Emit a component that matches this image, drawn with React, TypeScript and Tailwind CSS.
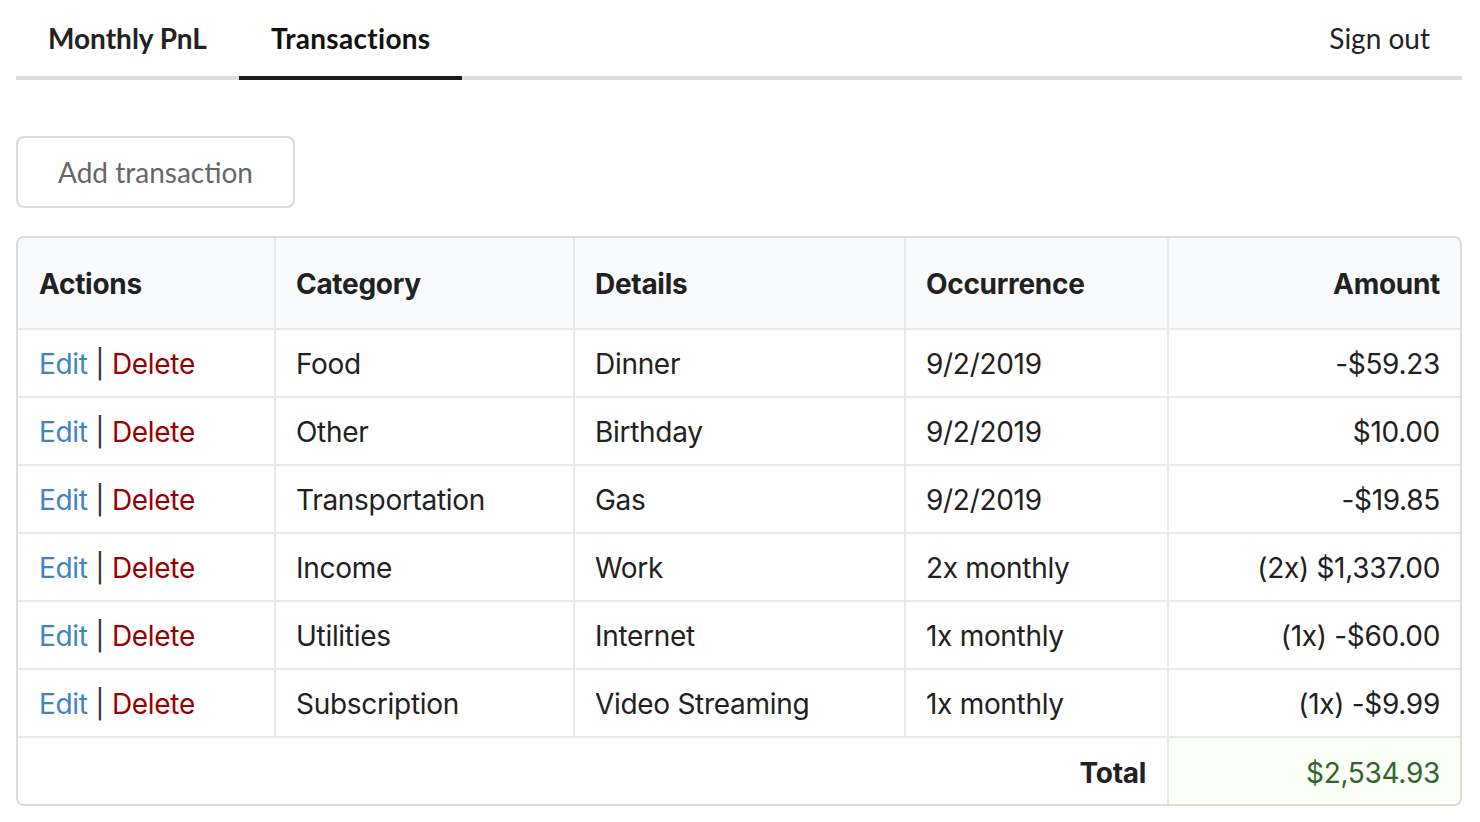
import React from "react";

const rows = [
  ["Food", "Dinner", "9/2/2019", "-$59.23"],
  ["Other", "Birthday", "9/2/2019", "$10.00"],
  ["Transportation", "Gas", "9/2/2019", "-$19.85"],
  ["Income", "Work", "2x monthly", "(2x) $1,337.00"],
  ["Utilities", "Internet", "1x monthly", "(1x) -$60.00"],
  ["Subscription", "Video Streaming", "1x monthly", "(1x) -$9.99"],
];

const cols = "grid grid-cols-[256px_299px_331px_263px_293px]";

export default function App() {
  return (
    <div className="min-h-[822px] w-[1480px] bg-white">
      <div className="ml-4 w-[1446px]">
        {/* Tabs */}
        <div className="flex border-b-4 border-[#dfdfdf] font-['Lato',sans-serif] text-[28px] leading-[28px]">
          <div className="-mb-1 px-8 py-6 font-bold text-[#222] border-b-4 border-transparent">Monthly PnL</div>
          <div className="-mb-1 px-8 py-6 font-bold tracking-[0.3px] text-[#111] border-b-4 border-[#1b1c1d]">Transactions</div>
          <div className="ml-auto -mb-1 px-8 py-6 text-[#222] border-b-4 border-transparent">Sign out</div>
        </div>

        {/* Button */}
        <div className="mt-14">
          <button className="h-[72px] w-[279px] rounded-lg border-2 border-[#dcdcdc] bg-white font-['Lato',sans-serif] text-[28px] leading-[28px] text-[#666]">
            Add transaction
          </button>
        </div>

        {/* Table */}
        <div className="mt-7 overflow-hidden rounded-lg border-2 border-[#dcdcdc] font-['Inter',sans-serif] text-[28px] tracking-[-0.3px] text-[#212121]">
          <div className={`${cols} h-[90px] bg-[#f9fafb] font-bold`}>
            <div className="flex items-center px-[21px] pt-[2px]">Actions</div>
            <div className="flex items-center border-l-2 border-[#e9e9e9] px-[20px] pt-[2px]">Category</div>
            <div className="flex items-center border-l-2 border-[#e9e9e9] px-[20px] pt-[2px]">Details</div>
            <div className="flex items-center border-l-2 border-[#e9e9e9] px-[20px] pt-[2px]">Occurrence</div>
            <div className="flex items-center justify-end border-l-2 border-[#e9e9e9] px-[20px] pt-[2px]">Amount</div>
          </div>
          {rows.map((r, i) => (
            <div key={i} className={`${cols} h-[68px] border-t-2 border-[#e9e9e9]`}>
              <div className="flex items-center whitespace-pre px-[21px] pt-[2px]">
                <span className="text-[#4183c4]">Edit</span>
                <span className="text-[#333]"> | </span>
                <span className="text-[#990000]">Delete</span>
              </div>
              <div className="flex items-center border-l-2 border-[#e9e9e9] px-[20px] pt-[2px]">{r[0]}</div>
              <div className="flex items-center border-l-2 border-[#e9e9e9] px-[20px] pt-[2px]">{r[1]}</div>
              <div className="flex items-center border-l-2 border-[#e9e9e9] px-[20px] pt-[2px]">{r[2]}</div>
              <div className="flex items-center justify-end border-l-2 border-[#e9e9e9] px-[20px] pt-[2px]">{r[3]}</div>
            </div>
          ))}
          <div className="grid h-[68px] grid-cols-[1149px_293px] border-t-2 border-[#e9e9e9]">
            <div className="flex items-center justify-end px-[21px] pt-[4px] font-bold">Total</div>
            <div className="flex items-center justify-end border-l-2 border-[#e9e9e9] bg-[#fcfff5] px-[20px] pt-[4px] text-[#2c662d]">
              $2,534.93
            </div>
          </div>
        </div>
      </div>
    </div>
  );
}
